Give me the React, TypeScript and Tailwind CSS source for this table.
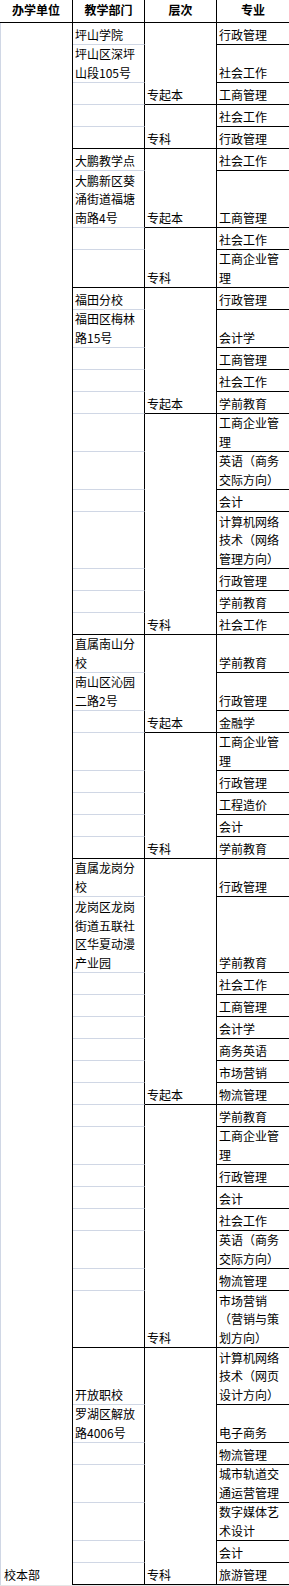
import React from "react";

type Row = { school: string[]; major: string[] };

// one entry per sheet row, top to bottom
const ROWS: Row[] = [
  { school: ["坪山学院"], major: ["行政管理"] },
  { school: ["坪山区深坪", "山段105号"], major: ["社会工作"] },
  { school: [], major: ["工商管理"] },
  { school: [], major: ["社会工作"] },
  { school: [], major: ["行政管理"] },
  { school: ["大鹏教学点"], major: ["社会工作"] },
  { school: ["大鹏新区葵", "涌街道福塘", "南路4号"], major: ["工商管理"] },
  { school: [], major: ["社会工作"] },
  { school: [], major: ["工商企业管", "理"] },
  { school: ["福田分校"], major: ["行政管理"] },
  { school: ["福田区梅林", "路15号"], major: ["会计学"] },
  { school: [], major: ["工商管理"] },
  { school: [], major: ["社会工作"] },
  { school: [], major: ["学前教育"] },
  { school: [], major: ["工商企业管", "理"] },
  { school: [], major: ["英语（商务", "交际方向）"] },
  { school: [], major: ["会计"] },
  { school: [], major: ["计算机网络", "技术（网络", "管理方向）"] },
  { school: [], major: ["行政管理"] },
  { school: [], major: ["学前教育"] },
  { school: [], major: ["社会工作"] },
  { school: ["直属南山分", "校"], major: ["学前教育"] },
  { school: ["南山区沁园", "二路2号"], major: ["行政管理"] },
  { school: [], major: ["金融学"] },
  { school: [], major: ["工商企业管", "理"] },
  { school: [], major: ["行政管理"] },
  { school: [], major: ["工程造价"] },
  { school: [], major: ["会计"] },
  { school: [], major: ["学前教育"] },
  { school: ["直属龙岗分", "校"], major: ["行政管理"] },
  { school: ["龙岗区龙岗", "街道五联社", "区华夏动漫", "产业园"], major: ["学前教育"] },
  { school: [], major: ["社会工作"] },
  { school: [], major: ["工商管理"] },
  { school: [], major: ["会计学"] },
  { school: [], major: ["商务英语"] },
  { school: [], major: ["市场营销"] },
  { school: [], major: ["物流管理"] },
  { school: [], major: ["学前教育"] },
  { school: [], major: ["工商企业管", "理"] },
  { school: [], major: ["行政管理"] },
  { school: [], major: ["会计"] },
  { school: [], major: ["社会工作"] },
  { school: [], major: ["英语（商务", "交际方向）"] },
  { school: [], major: ["物流管理"] },
  { school: [], major: ["市场营销", "（营销与策", "划方向）"] },
  { school: ["开放职校"], major: ["计算机网络", "技术（网页", "设计方向）"] },
  { school: ["罗湖区解放", "路4006号"], major: ["电子商务"] },
  { school: [], major: ["物流管理"] },
  { school: [], major: ["城市轨道交", "通运营管理"] },
  { school: [], major: ["数字媒体艺", "术设计"] },
  { school: [], major: ["会计"] },
  { school: [], major: ["旅游管理"] },
];

// 层次 merged cells: first row, last row (1-based body rows)
const LEVELS: [number, number, string][] = [
  [1, 3, "专起本"], [4, 5, "专科"],
  [6, 7, "专起本"], [8, 9, "专科"],
  [10, 14, "专起本"], [15, 21, "专科"],
  [22, 24, "专起本"], [25, 29, "专科"],
  [30, 37, "专起本"], [38, 45, "专科"],
  [46, 52, "专科"],
];

// last row of each 教学部门 block gets the dark line
const GROUP_ENDS = new Set([5, 9, 21, 29, 45, 52]);

const HEIGHTS: Record<number, string> = { 1: "h-[22px]", 2: "h-[38px]", 3: "h-[57px]", 4: "h-[76px]" };

function Lines({ lines }: { lines: string[] }) {
  return <>{lines.map((l, i) => <div key={i} className="whitespace-nowrap">{l}</div>)}</>;
}

export default function App() {
  const body = ROWS.length;
  return (
    <div className="w-[289px] bg-[#e6e6e6] text-[12px] leading-[18.5px] text-black" style={{ fontFamily: '"Noto Sans CJK SC", "Microsoft YaHei", sans-serif' }}>
      <div className="grid grid-cols-[73px_72px_72px_72px] bg-white">
        {["办学单位", "教学部门", "层次", "专业"].map((h, i) => (
          <div key={h} className={`h-[23px] flex items-center justify-center font-bold border-b border-black pb-[2px] ${i < 3 ? "border-r" : ""}`}>{h}</div>
        ))}

        <div className="col-start-1 border-l border-l-[#d0d7e5] border-r border-black flex flex-col justify-end pl-[3px] pb-px"
          style={{ gridRow: `2 / ${body + 2}` }}>校本部</div>

        {ROWS.map((r, i) => {
          const n = Math.max(r.school.length, r.major.length, 1);
          return (
            <React.Fragment key={i}>
              <div className={`col-start-2 border-r border-black border-b flex flex-col justify-end pl-[2px] ${GROUP_ENDS.has(i + 1) ? "border-b-black" : "border-b-[#d0d7e5]"}`}
                style={{ gridRow: `${i + 2}` }}>
                <Lines lines={r.school} />
              </div>
              <div className={`col-start-4 border-b border-black flex flex-col justify-end pl-[2px] ${HEIGHTS[n]}`}
                style={{ gridRow: `${i + 2}` }}>
                <Lines lines={r.major} />
              </div>
            </React.Fragment>
          );
        })}

        {LEVELS.map(([a, b, label]) => (
          <div key={a} className="col-start-3 border-r border-b border-black flex flex-col justify-end pl-[2px]"
            style={{ gridRow: `${a + 1} / ${b + 2}` }}>{label}</div>
        ))}
      </div>
      <div className="h-px" />
    </div>
  );
}
